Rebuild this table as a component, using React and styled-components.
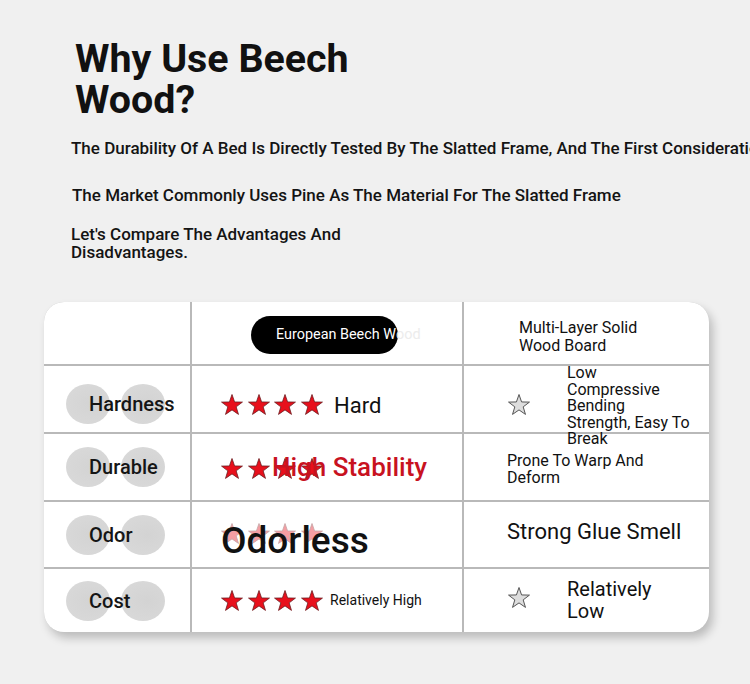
import React from 'react';
import styled, { createGlobalStyle } from 'styled-components';

const GlobalStyle = createGlobalStyle`
  html, body { margin: 0; padding: 0; background: #f0f0f0; }
  body { font-family: Roboto, "Noto Sans", "Liberation Sans", sans-serif; color: #111; }
`;

const Page = styled.div`
  width: 750px;
  height: 684px;
  overflow: hidden;
  background: #f0f0f0;
  display: flex;
  flex-direction: column;
`;

const Intro = styled.header`
  display: flex;
  flex-direction: column;
  align-items: flex-start;
  padding: 38px 0 0 71px;
`;

const Title = styled.h1`
  margin: 0 0 0 4px;
  font-size: 39.4px;
  line-height: 41px;
  font-weight: 700;
  max-width: 300px;
  color: #111;
`;

const Lead = styled.p`
  margin: ${(p) => p.$top}px 0 0 ${(p) => p.$indent || 0}px;
  font-size: 17px;
  line-height: 18px;
  font-weight: ${(p) => p.$weight || 400};
  color: #141414;
  white-space: ${(p) => (p.$nowrap ? 'nowrap' : 'normal')};
  max-width: ${(p) => (p.$max ? `${p.$max}px` : 'none')};
`;

const Table = styled.div`
  margin: 41px 0 0 44px;
  width: 665px;
  display: grid;
  grid-template-columns: 146px 270px 245px;
  grid-template-rows: 62px 66px 66px 65px 63px;
  gap: 2px;
  background: #b9b9b9;
  border-radius: 20px;
  box-shadow: 4px 6px 10px rgba(0, 0, 0, 0.22);
  overflow: hidden;
`;

const Cell = styled.div`
  background: #fff;
  display: flex;
  align-items: center;
  padding-left: ${(p) => p.$pad || 0}px;
  padding-top: ${(p) => p.$shift || 0}px;
  min-width: 0;
`;

const LabelStack = styled.div`
  display: grid;
  align-items: center;
  & > * { grid-area: 1 / 1; }
`;

const Blobs = styled.div`
  display: flex;
  gap: 11px;
`;

const Blob = styled.span`
  width: 44px;
  height: 40px;
  border-radius: 50%;
  background: radial-gradient(ellipse at 60% 50%, #d3d3d3 0%, #d8d8d8 70%, #dedede 100%);
  filter: blur(0.4px);
`;

const RowLabel = styled.span`
  margin-left: 23px;
  font-size: 20px;
  font-weight: 500;
  color: #151515;
  position: relative;
`;

const StarRow = styled.div`
  position: relative;
  display: flex;
  align-items: center;
  gap: 4.7px;
  margin-top: ${(p) => p.$offset || 0}px;
  opacity: ${(p) => (p.$faint ? 0.4 : 1)};
`;

const StarsAndText = styled.div`
  position: relative;
  display: flex;
  align-items: center;
`;

const Overlay = styled.span`
  position: absolute;
  left: ${(p) => p.$left}px;
  top: 50%;
  transform: translateY(calc(-50% + ${(p) => p.$dy || 0}px));
  white-space: nowrap;
  font-size: ${(p) => p.$size}px;
  font-weight: ${(p) => p.$weight || 400};
  color: ${(p) => p.$color || '#111'};
`;

const Note = styled.span`
  position: ${(p) => (p.$raise ? 'relative' : 'static')};
  z-index: ${(p) => (p.$raise ? 2 : 'auto')};
  margin-left: ${(p) => p.$gap || 0}px;
  margin-top: ${(p) => p.$dy || 0}px;
  font-size: ${(p) => p.$size}px;
  line-height: ${(p) => p.$lh || 1.2};
  font-weight: ${(p) => p.$weight || 400};
  color: #111;
  white-space: nowrap;
`;

const Pill = styled.div`
  margin-left: 59px;
  margin-top: 3px;
  width: 147px;
  height: 38px;
  border-radius: 19px;
  background: #000;
  color: #fff;
  display: flex;
  align-items: center;
  padding-left: 25px;
  box-sizing: border-box;
  font-size: 14.4px;
  white-space: nowrap;
`;

const PillTail = styled.span`
  color: #ececec;
`;

const STAR_POINTS =
  '11,0.5 13.59,7.94 21.46,8.1 15.18,12.86 17.47,20.4 11,15.9 4.53,20.4 6.82,12.86 0.54,8.1 8.41,7.94';

function Star({ empty }) {
  return (
    <svg width="22" height="21" viewBox="0 0 22 21" style={{ overflow: 'visible', flex: 'none' }}>
      <polygon
        points={STAR_POINTS}
        fill={empty ? '#dddddd' : '#e8101c'}
        stroke={empty ? '#555' : '#6b1c20'}
        strokeWidth={empty ? 1 : 0.8}
        strokeLinejoin="round"
      />
    </svg>
  );
}

function Stars({ faint, offset }) {
  return (
    <StarRow $faint={faint} $offset={offset}>
      <Star />
      <Star />
      <Star />
      <Star />
    </StarRow>
  );
}

function Label({ children }) {
  return (
    <LabelStack>
      <Blobs>
        <Blob />
        <Blob />
      </Blobs>
      <RowLabel>{children}</RowLabel>
    </LabelStack>
  );
}

export default function App() {
  return (
    <Page>
      <GlobalStyle />
      <Intro>
        <Title>Why Use Beech Wood?</Title>
        <Lead $top={19} $weight={500} $nowrap>
          The Durability Of A Bed Is Directly Tested By The Slatted Frame, And The First Consideration Is The Material
        </Lead>
        <Lead $top={29} $indent={1} $weight={500} $nowrap>
          The Market Commonly Uses Pine As The Material For The Slatted Frame
        </Lead>
        <Lead $top={21} $weight={500} $max={285}>
          Let's Compare The Advantages And Disadvantages.
        </Lead>
      </Intro>

      <Table>
        <Cell />
        <Cell>
          <Pill>
            European Beech W<PillTail>ood</PillTail>
          </Pill>
        </Cell>
        <Cell $pad={55}>
          <Note $size={16} $lh="18px" $dy={7}>
            Multi-Layer Solid
            <br />
            Wood Board
          </Note>
        </Cell>

        <Cell $pad={22} $shift={9}>
          <Label>Hardness</Label>
        </Cell>
        <Cell $pad={29} $shift={12}>
          <Stars offset={-2} />
          <Note $size={22} $gap={11} $dy={2}>Hard</Note>
        </Cell>
        <Cell $pad={44}>
          <StarRow $offset={10}>
            <Star empty />
          </StarRow>
          <Note $raise $size={16} $lh="16.5px" $gap={37} $dy={15}>
            Low
            <br />
            Compressive
            <br />
            Bending
            <br />
            Strength, Easy To
            <br />
            Break
          </Note>
        </Cell>

        <Cell $pad={22}>
          <Label>Durable</Label>
        </Cell>
        <Cell $pad={29}>
          <StarsAndText>
            <Stars offset={2} />
            <Overlay $left={51} $size={26} $weight={500} $color="#c8121f" $dy={0}>
              High Stability
            </Overlay>
          </StarsAndText>
        </Cell>
        <Cell $pad={43}>
          <Note $size={16} $lh="17px" $dy={4}>
            Prone To Warp And
            <br />
            Deform
          </Note>
        </Cell>

        <Cell $pad={22}>
          <Label>Odor</Label>
        </Cell>
        <Cell $pad={29}>
          <StarsAndText>
            <Stars faint offset={-3} />
            <Overlay $left={0} $size={37} $weight={500} $dy={5}>
              Odorless
            </Overlay>
          </StarsAndText>
        </Cell>
        <Cell $pad={43}>
          <Note $size={22} $dy={-4}>Strong Glue Smell</Note>
        </Cell>

        <Cell $pad={22}>
          <Label>Cost</Label>
        </Cell>
        <Cell $pad={29}>
          <Stars />
          <Note $size={14} $gap={7}>Relatively High</Note>
        </Cell>
        <Cell $pad={44}>
          <StarRow $offset={-6}>
            <Star empty />
          </StarRow>
          <Note $size={20} $lh="22px" $gap={37} $dy={-1}>
            Relatively
            <br />
            Low
          </Note>
        </Cell>
      </Table>
    </Page>
  );
}
